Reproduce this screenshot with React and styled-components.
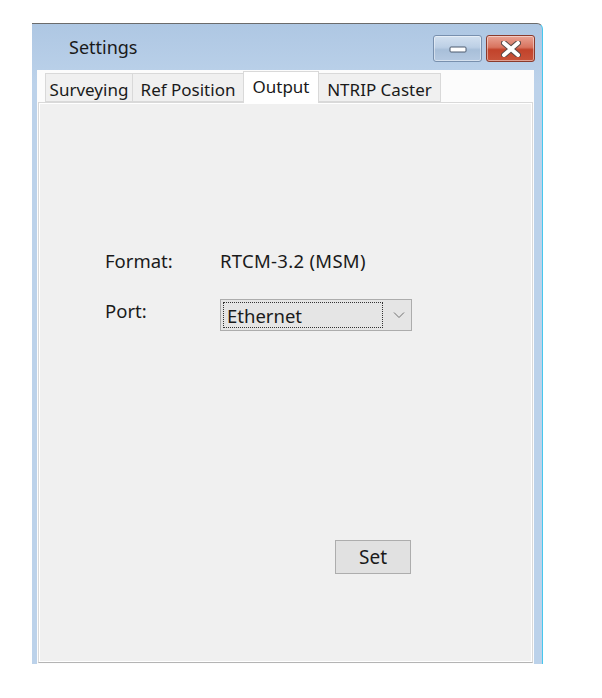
import React from 'react';
import styled, { createGlobalStyle } from 'styled-components';

const GlobalStyle = createGlobalStyle`
  body {
    margin: 0;
    background: #ffffff;
    font-family: "Noto Sans", "Open Sans", sans-serif;
  }
`;

const Page = styled.div`
  padding-top: 23px;
  padding-left: 32px;
`;

const Window = styled.div`
  width: 511px;
  height: 641px;
  display: flex;
  flex-direction: column;
  background: linear-gradient(#aec7e3, #bcd2ea 60px, #bcd2ea);
  border-top: 1px solid #6b6b6b;
  border-right: 1px solid #47c7ee;
  border-top-right-radius: 6px;
  box-sizing: border-box;
`;

const TitleBar = styled.div`
  height: 46px;
  display: flex;
  align-items: flex-start;
  justify-content: space-between;
  padding-left: 37px;
  padding-right: 7px;
`;

const Title = styled.div`
  font-size: 18px;
  color: #1a1a1a;
  margin-top: 11px;
`;

const CaptionButtons = styled.div`
  display: flex;
  gap: 4px;
  margin-top: 11px;
`;

const CaptionButton = styled.div`
  width: 49px;
  height: 27px;
  box-sizing: border-box;
  display: flex;
  align-items: center;
  justify-content: center;
  border: 1px solid ${(p) => (p.close ? '#8a3b2d' : '#7890ae')};
  border-radius: 3px;
  background: ${(p) => (p.close
    ? 'linear-gradient(#e9a394, #d8745f 45%, #c2432b 55%, #c8533a)'
    : 'linear-gradient(#d3e1f0, #bccfe5 45%, #a8bfd9 55%, #b5c9e1)')};
  box-shadow: inset 0 0 0 1px rgba(255, 255, 255, 0.45);
`;

const Client = styled.div`
  flex: 1;
  margin: 0 8px 0 5px;
  background: #fcfcfc;
  display: flex;
  flex-direction: column;
`;

const TabStrip = styled.div`
  display: flex;
  align-items: flex-end;
  height: 32px;
  padding-left: 8px;
`;

const Tab = styled.div`
  width: ${(p) => p.w}px;
  height: ${(p) => (p.active ? '32px' : '29px')};
  box-sizing: border-box;
  padding-top: ${(p) => (p.active ? '3px' : '4px')};
  margin-bottom: ${(p) => (p.active ? '-1px' : '0')};
  text-align: center;
  font-size: 17px;
  color: #1a1a1a;
  background: ${(p) => (p.active ? '#ffffff' : '#f0f0f0')};
  border: 1px solid #d9d9d9;
  border-bottom: ${(p) => (p.active ? 'none' : '1px solid #d9d9d9')};
  border-left: ${(p) => (p.first || p.active ? '1px solid #d9d9d9' : 'none')};
  border-right: ${(p) => (p.beforeActive ? 'none' : '1px solid #d9d9d9')};
  position: relative;
  z-index: ${(p) => (p.active ? 1 : 0)};
  white-space: nowrap;
`;

const Panel = styled.div`
  flex: 1;
  margin: 0 1px 1px 1px;
  border: 1px solid #d9d9d9;
  border-bottom-color: #b4b4b4;
  box-shadow: inset 0 0 0 1px #ffffff;
  background: #f0f0f0;
  display: flex;
  flex-direction: column;
  align-items: flex-start;
  padding: 145px 0 0 66px;
  box-sizing: border-box;
`;

const Form = styled.div`
  width: 307px;
  display: flex;
  flex-direction: column;
`;

const Row = styled.div`
  display: flex;
  align-items: center;
  margin-bottom: ${(p) => p.gap || 0}px;
`;

const Label = styled.div`
  width: 115px;
  font-size: 18.5px;
  color: #1a1a1a;
  margin-top: ${(p) => p.shift || 0}px;
`;

const Value = styled.div`
  font-size: 18.5px;
  color: #1a1a1a;
  letter-spacing: 0.3px;
`;

const Combo = styled.div`
  width: 192px;
  height: 32px;
  box-sizing: border-box;
  border: 1px solid #acacac;
  background: #e5e5e5;
  display: flex;
  align-items: center;
  padding: 2px;
`;

const ComboText = styled.div`
  width: 160px;
  height: 26px;
  box-sizing: border-box;
  border: 1px dotted #333;
  font-size: 18.5px;
  color: #1a1a1a;
  padding-left: 3px;
  line-height: 26px;
`;

const Chevron = styled.svg`
  margin-left: 10px;
`;

const ButtonRow = styled.div`
  display: flex;
  justify-content: flex-end;
  margin-top: 209px;
  padding-right: 1px;
`;

const Button = styled.div`
  width: 76px;
  height: 34px;
  box-sizing: border-box;
  border: 1px solid #adadad;
  background: #e1e1e1;
  display: flex;
  align-items: center;
  justify-content: center;
  font-size: 19px;
  color: #1a1a1a;
`;

export default function App() {
  return (
    <Page>
      <GlobalStyle />
      <Window>
        <TitleBar>
          <Title>Settings</Title>
          <CaptionButtons>
            <CaptionButton>
              <svg width="18" height="8" viewBox="0 0 18 8">
                <rect x="1" y="2" width="16" height="5" rx="1" fill="#ffffff" stroke="#4c5a6e" strokeWidth="1" />
              </svg>
            </CaptionButton>
            <CaptionButton close>
              <svg width="20" height="16" viewBox="0 0 20 16">
                <path d="M3 2 L17 14 M17 2 L3 14" stroke="#5a4a48" strokeWidth="6" strokeLinecap="round" />
                <path d="M3 2 L17 14 M17 2 L3 14" stroke="#ffffff" strokeWidth="4" strokeLinecap="round" />
              </svg>
            </CaptionButton>
          </CaptionButtons>
        </TitleBar>
        <Client>
          <TabStrip>
            <Tab first w={88}>Surveying</Tab>
            <Tab w={110} beforeActive>Ref Position</Tab>
            <Tab active w={76}>Output</Tab>
            <Tab w={122}>NTRIP Caster</Tab>
          </TabStrip>
          <Panel>
            <Form>
              <Row gap={26}>
                <Label>Format:</Label>
                <Value>RTCM-3.2 (MSM)</Value>
              </Row>
              <Row>
                <Label shift={-10}>Port:</Label>
                <Combo>
                  <ComboText>Ethernet</ComboText>
                  <Chevron width="12" height="8" viewBox="0 0 12 8">
                    <path d="M1 1.5 L6 6.5 L11 1.5" fill="none" stroke="#707070" strokeWidth="1" />
                  </Chevron>
                </Combo>
              </Row>
              <ButtonRow>
                <Button>Set</Button>
              </ButtonRow>
            </Form>
          </Panel>
        </Client>
      </Window>
    </Page>
  );
}
